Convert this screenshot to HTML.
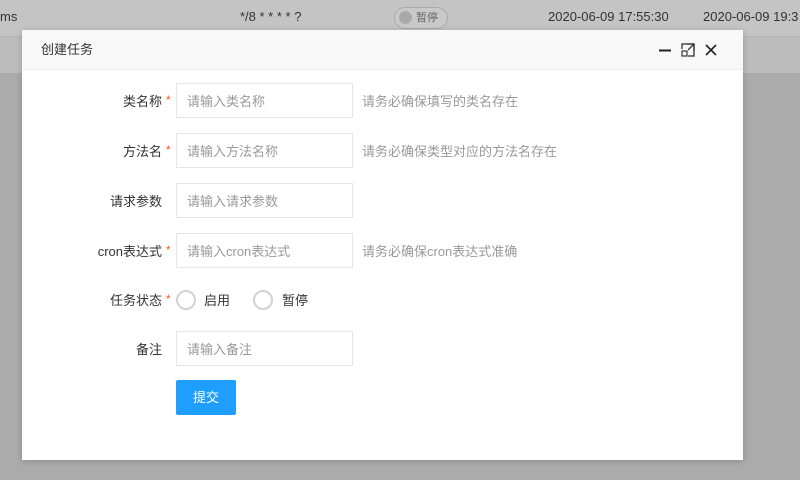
<!DOCTYPE html><html><head><meta charset="utf-8"><style>
body{margin:0;width:800px;height:480px;overflow:hidden;background:#ababab;font-family:"Liberation Sans","Noto Sans CJK SC",sans-serif;font-size:13px;position:relative}
.top{position:absolute;left:0;top:0;width:800px;height:36px;background:#c4c4c4;color:#333}
.top span{position:absolute;top:9px}
.row2{position:absolute;left:0;top:36px;width:800px;height:36px;background:#bcbcbc;border-top:1px solid #b4b4b4}
.dlg{position:absolute;left:22px;top:30px;width:721px;height:430px;background:#fff;box-shadow:0 1px 6px rgba(0,0,0,.2)}
.hd{height:39px;background:#f8f8f8;border-bottom:1px solid #eee;color:#333;font-size:13px;line-height:39px;padding-left:19px}
.lbl{position:absolute;left:0;width:140px;text-align:right;color:#333;font-size:13px;height:35px;line-height:37px}
.star{position:absolute;left:144px;color:#ff5722;font-size:12px;line-height:34px}
.inp{position:absolute;left:154px;width:165px;height:33px;border:1px solid #e6e6e6;color:#999;line-height:35px;padding-left:10px}
.hint{position:absolute;left:340px;color:#999;font-size:13px;line-height:37px}
.rd{position:absolute;width:16px;height:16px;border:2px solid #d2d2d2;border-radius:50%;top:260px}
.btn{position:absolute;left:154px;top:350px;width:60px;height:35px;background:#1e9fff;color:#fff;text-align:center;line-height:35px;border-radius:2px}
</style></head><body>
<div class="top"><span style="left:0">ms</span><span style="left:240px">*/8 * * * * ?</span>
<span style="left:394px;top:7px;width:52px;height:20px;border:1px solid #aaa;border-radius:11px;background:#c9c9c9;font-size:11px;line-height:20px;color:#666"><i style="display:inline-block;width:13px;height:13px;border-radius:50%;background:#a9a9a9;vertical-align:middle;margin:0 4px 2px 4px"></i>暂停</span>
<span style="left:548px">2020-06-09 17:55:30</span><span style="left:703px">2020-06-09 19:3</span></div>
<div class="row2"></div>
<div class="dlg">
<div class="hd">创建任务
<svg style="position:absolute;right:14px;top:13px" width="70" height="14" viewBox="0 0 70 14"><path d="M0 7.5H12" stroke="#222" stroke-width="2"/><rect x="23" y="1" width="12" height="12" fill="none" stroke="#333" stroke-width="1.3"/><path d="M28 1H35V8M29 7L35 1" stroke="#333" stroke-width="1.3" fill="none"/><rect x="22" y="6" width="7" height="8" fill="#f8f8f8"/><rect x="23" y="8" width="5" height="5" fill="none" stroke="#333" stroke-width="1.2"/><path d="M47 2L57 12M57 2L47 12" stroke="#222" stroke-width="1.6"/></svg></div>
<div class="lbl" style="top:53px">类名称</div><span class="star" style="top:53px">*</span>
<div class="inp" style="top:53px">请输入类名称</div><div class="hint" style="top:53px">请务必确保填写的类名存在</div>
<div class="lbl" style="top:103px">方法名</div><span class="star" style="top:103px">*</span>
<div class="inp" style="top:103px">请输入方法名称</div><div class="hint" style="top:103px">请务必确保类型对应的方法名存在</div>
<div class="lbl" style="top:153px">请求参数</div>
<div class="inp" style="top:153px">请输入请求参数</div>
<div class="lbl" style="top:203px">cron表达式</div><span class="star" style="top:203px">*</span>
<div class="inp" style="top:203px">请输入cron表达式</div><div class="hint" style="top:203px">请务必确保cron表达式准确</div>
<div class="lbl" style="top:252px">任务状态</div><span class="star" style="top:252px">*</span>
<div class="rd" style="left:154px"></div><span style="position:absolute;left:182px;top:252px;color:#333;line-height:37px">启用</span>
<div class="rd" style="left:231px"></div><span style="position:absolute;left:260px;top:252px;color:#333;line-height:37px">暂停</span>
<div class="lbl" style="top:301px">备注</div>
<div class="inp" style="top:301px">请输入备注</div>
<div class="btn">提交</div>
</div>
</body></html>
